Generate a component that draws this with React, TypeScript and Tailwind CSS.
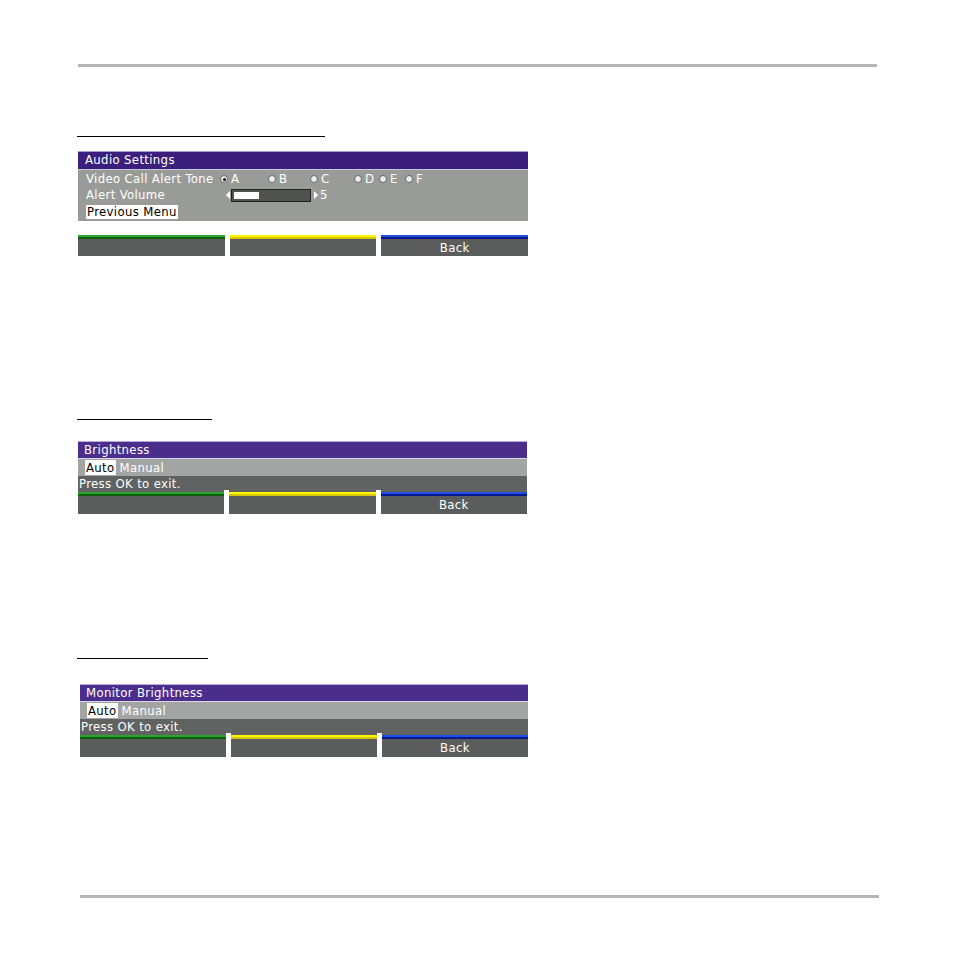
import React from "react";

const font = { fontFamily: '"DejaVu Sans Condensed", "DejaVu Sans", sans-serif' };

function Radio({ on }: { on?: boolean }) {
  return (
    <span className="inline-flex items-center justify-center w-[8px] h-[8px] rounded-full bg-[#ececec] border border-[#666] mr-[3px]">
      {on ? <span className="w-[3px] h-[3px] rounded-full bg-black" /> : null}
    </span>
  );
}

function SoftKeys({ sep }: { sep?: boolean }) {
  return (
    <div className="flex h-[22px]">
      <div className="flex-1 flex flex-col">
        <div className="h-[2px] bg-[#2fa32f]" />
        <div className="h-[2px] bg-[#0c5f0c]" />
        <div className="flex-1 bg-[#5a5d5b]" />
      </div>
      <div className={sep ? "w-[5px] bg-white -mt-[2px]" : "w-[5px]"} />
      <div className="flex-1 flex flex-col">
        <div className="h-[2px] bg-[#fff700]" />
        <div className="h-[2px] bg-[#d9c800]" />
        <div className="flex-1 bg-[#5a5d5b]" />
      </div>
      <div className={sep ? "w-[5px] bg-white -mt-[2px]" : "w-[5px]"} />
      <div className="flex-1 flex flex-col">
        <div className="h-[2px] bg-[#1d4fe0]" />
        <div className="h-[2px] bg-[#02168f]" />
        <div className="flex-1 bg-[#5a5d5b] text-white text-[13px] leading-[18px] text-center tracking-[0.35px]">
          Back
        </div>
      </div>
    </div>
  );
}

function ModePanel({ title, left, width }: { title: string; left: number; width: number }) {
  return (
    <div style={{ marginLeft: left, width }} className="flex flex-col">
      <div className="h-[17px] bg-[#4b2d8c] border-t border-[#b9a9df] text-white text-[13px] leading-[15px] pl-[6px] tracking-[0.35px]">
        {title}
      </div>
      <div className="h-[1px] bg-[#d8d8e8]" />
      <div className="h-[17px] bg-[#a2a5a3] flex items-center pl-[7px] text-[13px] tracking-[0.35px]">
        <span className="bg-white text-black px-[1px] leading-[15px]">Auto</span>
        <span className="text-white ml-[4px]">Manual</span>
      </div>
      <div className="h-[16px] bg-[#606361] text-white text-[13px] leading-[15px] pl-[1px] tracking-[0.35px]">
        Press OK to exit.
      </div>
      <SoftKeys sep />
    </div>
  );
}

export default function App() {
  return (
    <div style={font} className="w-[954px] h-[954px] bg-white flex flex-col">
      <div className="h-[64px]" />
      <div className="ml-[78px] w-[799px] h-[3px] bg-[#b4b4b4]" />
      <div className="h-[69px]" />
      <div className="ml-[77px] w-[248px] h-[1px] bg-black" />
      <div className="h-[14px]" />
      {/* Panel 1 */}
      <div className="ml-[78px] w-[450px] flex flex-col">
        <div className="h-[18px] bg-[#3c1f7c] border-t border-[#a899d0] text-white text-[13px] leading-[16px] pl-[7px] tracking-[0.35px]">
          Audio Settings
        </div>
        <div className="h-[1px] bg-[#c8c8d8]" />
        <div className="h-[51px] bg-[#999b98] text-white text-[13px] tracking-[0.35px] pl-[8px] pt-[1px] flex flex-col">
          <div className="h-[16px] leading-[16px] flex items-center">
            <span className="w-[134px]">Video Call Alert Tone</span>
            <span className="w-[48px] flex items-center"><Radio on />A</span>
            <span className="w-[42px] flex items-center"><Radio />B</span>
            <span className="w-[44px] flex items-center"><Radio />C</span>
            <span className="w-[25px] flex items-center"><Radio />D</span>
            <span className="w-[26px] flex items-center"><Radio />E</span>
            <span className="flex items-center"><Radio />F</span>
          </div>
          <div className="h-[16px] leading-[16px] flex items-center">
            <span className="w-[140px]">Alert Volume</span>
            <span className="w-0 h-0 border-y-[4px] border-y-transparent border-r-[4px] border-r-white mr-[1px]" />
            <span className="w-[80px] h-[13px] bg-[#4f524f] border border-[#222] flex items-center pl-[2px]">
              <span className="w-[25px] h-[7px] bg-white" />
            </span>
            <span className="w-0 h-0 border-y-[4px] border-y-transparent border-l-[4px] border-l-white ml-[3px] mr-[2px]" />
            <span>5</span>
          </div>
          <div className="h-[17px] flex items-center">
            <span className="bg-white text-black leading-[14px] px-[1px]">Previous Menu</span>
          </div>
        </div>
      </div>
      <div className="h-[14px]" />
      <div className="ml-[78px] w-[450px] h-[21px] overflow-hidden">
        <SoftKeys />
      </div>
      <div className="h-[163px]" />
      <div className="ml-[77px] w-[135px] h-[1px] bg-black" />
      <div className="h-[21px]" />
      <ModePanel title="Brightness" left={78} width={449} />
      <div className="h-[144px]" />
      <div className="ml-[77px] w-[131px] h-[1px] bg-black" />
      <div className="h-[25px]" />
      <ModePanel title="Monitor Brightness" left={80} width={448} />
      <div className="h-[138px]" />
      <div className="ml-[80px] w-[799px] h-[3px] bg-[#b4b4b4]" />
    </div>
  );
}
